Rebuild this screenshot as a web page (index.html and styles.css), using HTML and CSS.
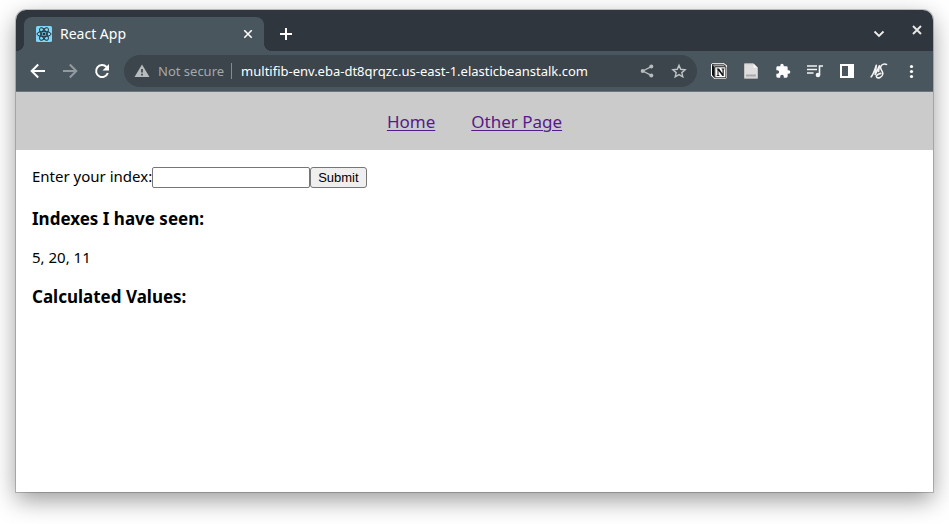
FILE: index.html
```html
<!DOCTYPE html>
<html lang="en">
<head>
<meta charset="utf-8">
<title>React App</title>
<link rel="stylesheet" href="styles.css">
</head>
<body>
<div class="window">
  <div class="tabstrip">
    <div class="tab">
      <svg class="favicon" width="16" height="16" viewBox="0 0 16 16" aria-hidden="true">
        <rect width="16" height="16" rx="1.5" fill="#7fd5fa"/>
        <g fill="none" stroke="#26323a" stroke-width="1">
          <ellipse cx="8" cy="8" rx="7" ry="2.7"/>
          <ellipse cx="8" cy="8" rx="7" ry="2.7" transform="rotate(60 8 8)"/>
          <ellipse cx="8" cy="8" rx="7" ry="2.7" transform="rotate(120 8 8)"/>
        </g>
        <circle cx="8" cy="8" r="1.5" fill="#26323a"/>
      </svg>
      <span class="tab-title">React App</span>
      <button class="icon-btn tab-close" aria-label="Close tab">
        <svg width="16" height="16" viewBox="0 0 16 16"><path d="M4.3 4.3l7.4 7.4M11.7 4.3l-7.4 7.4" stroke="#fff" stroke-width="1.6"/></svg>
      </button>
    </div>
    <button class="icon-btn new-tab" aria-label="New tab">
      <svg width="16" height="16" viewBox="0 0 16 16"><path d="M8 2v12M2 8h12" stroke="#fff" stroke-width="2"/></svg>
    </button>
    <button class="icon-btn tab-search" aria-label="Search tabs">
      <svg width="16" height="16" viewBox="0 0 16 16"><path d="M3.5 5.5L8 10l4.5-4.5" fill="none" stroke="#eee" stroke-width="1.8"/></svg>
    </button>
    <button class="icon-btn window-close" aria-label="Close window">
      <svg width="16" height="16" viewBox="0 0 16 16"><path d="M4 4l8 8M12 4l-8 8" stroke="#e6e6e6" stroke-width="2"/></svg>
    </button>
  </div>

  <div class="toolbar">
    <div class="group">
      <button class="icon-btn" aria-label="Back">
        <svg width="16" height="16" viewBox="0 0 16 16"><path d="M15 8H2.500M8.200 1.500L1.700 8l6.500 6.500" fill="none" stroke="#fff" stroke-width="2"/></svg>
      </button>
      <button class="icon-btn" aria-label="Forward">
        <svg width="16" height="16" viewBox="0 0 16 16"><path d="M1 8h12.500M7.800 1.500L14.300 8l-6.500 6.500" fill="none" stroke="#929a9f" stroke-width="2"/></svg>
      </button>
      <button class="icon-btn" aria-label="Reload">
        <svg width="16" height="16" viewBox="0 0 16 16"><path d="M13.800 10A6 6 0 1 1 12.500 4" fill="none" stroke="#fff" stroke-width="2"/><path d="M15 1v6.500H8.500z" fill="#fff"/></svg>
      </button>
    </div>

    <div class="omnibox">
      <svg class="warning" width="16" height="16" viewBox="0 0 16 16" aria-hidden="true"><path d="M8 1.500L15.500 14H.5z" fill="#b9bcbe"/><path d="M8 6v3.500M8 10.700v1.800" stroke="#3b454b" stroke-width="1.700"/></svg>
      <span class="secure">Not secure</span>
      <input class="url" aria-label="Address" value="multifib-env.eba-dt8qrqzc.us-east-1.elasticbeanstalk.com">
      <button class="icon-btn" aria-label="Share">
        <svg width="16" height="16" viewBox="0 0 16 16"><path d="M12.300 3.700L3.800 8l8.500 4.300" fill="none" stroke="#b9bcbe" stroke-width="1.300"/><g fill="#b9bcbe"><circle cx="12.300" cy="3.600" r="2"/><circle cx="3.700" cy="8" r="2"/><circle cx="12.300" cy="12.400" r="2"/></g></svg>
      </button>
      <button class="icon-btn" aria-label="Bookmark">
        <svg width="16" height="16" viewBox="0 0 16 16"><path d="M8 2.300l1.700 4 4.400.4-3.300 2.900 1 4.300L8 11.600l-3.800 2.300 1-4.300-3.300-2.900 4.400-.4z" fill="none" stroke="#c0c3c5" stroke-width="1.400"/></svg>
      </button>
    </div>

    <div class="group">
      <button class="icon-btn" aria-label="Notion">
        <svg width="16" height="16" viewBox="0 0 16 16"><path d="M0 1.500L1.500 0h11.200L16 2.500v12L14.500 16H3.500L0 12.500z" fill="#fff"/><path d="M1 1.500L3.500 4v11L1 12z" fill="#111"/><path d="M1.300 1.300h11l2.200 1.700H3.800z" fill="#fff" stroke="#111" stroke-width=".8"/><path d="M3.800 3.800h11.100v11H3.800z" fill="#fff" stroke="#111" stroke-width=".9"/><path d="M5.700 5.500h2.400l3.400 5V6.600l-1-.3v-.8h3v.8l-.8.3v6.500h-1.300L7.500 7.700v4.400l1.100.3v.7H5.600v-.7l.9-.3V6.500l-.8-.2z" fill="#111"/></svg>
      </button>
      <button class="icon-btn" aria-label="Document extension">
        <svg width="16" height="16" viewBox="0 0 16 16"><path d="M1.500.8h9l4 4v10.400h-13z" fill="#dedede" stroke="#c4c1bd"/><path d="M10.500.8v4h4z" fill="#f7f7f7"/><path d="M3 11.500h10v2H3z" fill="#a8a8a8"/></svg>
      </button>
      <button class="icon-btn" aria-label="Extensions">
        <svg width="16" height="16" viewBox="0 0 24 24"><path d="M20.500 11H19V7a2 2 0 0 0-2-2h-4V3.500a2.500 2.500 0 0 0-5 0V5H4a2 2 0 0 0-2 2v3.800h1.500a2.700 2.700 0 0 1 0 5.400H2V20a2 2 0 0 0 2 2h3.800v-1.500a2.700 2.700 0 0 1 5.400 0V22H17a2 2 0 0 0 2-2v-4h1.500a2.500 2.500 0 0 0 0-5z" fill="#fff"/></svg>
      </button>
      <button class="icon-btn" aria-label="Media controls">
        <svg width="16" height="16" viewBox="0 0 16 16"><path d="M0 3h10M0 6.500h10M0 10h6.500M12.500 12V3h3.500" fill="none" stroke="#f4f4f4" stroke-width="1.600"/><circle cx="11" cy="12" r="2.300" fill="#f4f4f4"/></svg>
      </button>
      <button class="icon-btn" aria-label="Side panel">
        <svg width="16" height="16" viewBox="0 0 16 16"><path d="M1 1h14v14H1zM3 3v10h6V3z" fill="#fff" fill-rule="evenodd"/></svg>
      </button>
      <button class="icon-btn" aria-label="Profile">
        <svg width="18" height="16" viewBox="0 0 18 16"><path d="M1.200 13.800C3.500 11 4.700 7 6.300 2.300L5.200 11.500C7 8.500 8 5.500 9.300 2.800L8.600 8.500M16.500 1.500C14 .2 11.300 1.600 10.600 4c-.6 2.600 2.600 4 2.200 7-.4 3.300-4.800 5-6.200 3-.9-1.600 1.400-3 4.200-3.600" fill="none" stroke="#f2f2f2" stroke-width="1.600" stroke-linecap="round" stroke-linejoin="round"/></svg>
      </button>
      <button class="icon-btn" aria-label="Menu">
        <svg width="16" height="16" viewBox="0 0 16 16"><g fill="#fff"><circle cx="8.500" cy="3.500" r="1.600"/><circle cx="8.500" cy="8.500" r="1.600"/><circle cx="8.500" cy="13.500" r="1.600"/></g></svg>
      </button>
    </div>
  </div>

  <header class="site-nav">
    <a href="#home">Home</a>
    <a href="#other">Other Page</a>
  </header>

  <main class="content">
    <form class="index-form">
      <label for="index">Enter your index:</label>
      <input id="index" class="index-input">
      <button class="submit" type="button">Submit</button>
    </form>
    <h3>Indexes I have seen:</h3>
    <p>5, 20, 11</p>
    <h3>Calculated Values:</h3>
  </main>
</div>
</body>
</html>
```
FILE: styles.css
```css
* { box-sizing: border-box; }

body {
  margin: 0;
  padding: 10px 16px 32px;
  min-height: 100vh;
  display: flex;
  background: #fff;
  color: #000;
  font: 15px/20px "Noto Sans", "Open Sans", sans-serif;
}

.window {
  flex: 1;
  min-width: 0;
  display: flex;
  flex-direction: column;
  border-radius: 10px 10px 0 0;
  background: #fff;
  box-shadow: 0 0 0 1px rgba(0, 0, 0, 0.2), 0 8px 24px rgba(0, 0, 0, 0.4);
}

.icon-btn {
  display: flex;
  align-items: center;
  justify-content: center;
  flex: none;
  width: 32px;
  height: 32px;
  padding: 0;
  border: 0;
  background: none;
}

.tabstrip {
  display: flex;
  align-items: center;
  height: 41px;
  padding: 7px 0 0 8px;
  border-radius: 10px 10px 0 0;
  background: #2f363d;
}

.tab {
  position: relative;
  display: flex;
  align-items: center;
  gap: 8px;
  width: 240px;
  height: 34px;
  padding: 0 8px 0 12px;
  border-radius: 8px 8px 0 0;
  background: #49565e;
  color: #fff;
  font-size: 14px;
}

.tab::before,
.tab::after {
  content: "";
  position: absolute;
  bottom: 0;
  width: 8px;
  height: 8px;
}

.tab::before {
  right: 100%;
  background: radial-gradient(circle at 0 0, transparent 8px, #49565e 8px);
}

.tab::after {
  left: 100%;
  background: radial-gradient(circle at 100% 0, transparent 8px, #49565e 8px);
}

.tab-title { flex: 1; }
.tab-close { width: 16px; }
.new-tab { margin-left: 6px; }
.tab-search { margin-left: auto; }

.window-close {
  height: 26px;
  margin-left: 6px;
  align-self: flex-start;
}

.toolbar {
  display: flex;
  align-items: center;
  gap: 6px;
  height: 41px;
  padding: 0 6px;
  border-bottom: 1px solid #6b757b;
  background: #49565e;
}

.group { display: flex; }

.omnibox {
  flex: 1;
  min-width: 0;
  display: flex;
  align-items: center;
  height: 32px;
  padding: 0 2px 0 10px;
  border-radius: 16px;
  background: #3b454b;
  font-size: 13px;
}

.secure {
  margin: 0 7px 0 8px;
  color: #a5a9ab;
  white-space: nowrap;
}

.url {
  flex: 1;
  min-width: 0;
  height: 16px;
  padding: 0 0 0 9px;
  border: 0;
  border-left: 1px solid #858b8f;
  background: none;
  color: #fff;
  font: inherit;
}

.site-nav {
  display: flex;
  align-items: center;
  justify-content: center;
  gap: 36px;
  min-height: 58px;
  padding-top: 2px;
  background: #cbcbcb;
  font-size: 17px;
}

.site-nav a {
  color: #551a8b;
  text-decoration-thickness: 1px;
  text-underline-offset: 2px;
}

.content { padding: 17px 16px; }

.index-form {
  display: flex;
  align-items: flex-start;
}

.index-form label { line-height: 18px; }

.index-input {
  width: 158px;
  height: 21px;
  padding: 1px 2px;
  border: 1px solid #767676;
  border-radius: 2px;
}

.submit {
  height: 21px;
  padding: 0 7px;
  border: 1px solid #767676;
  border-radius: 3px;
  background: #efefef;
  color: #000;
  font: 13px "Liberation Sans", sans-serif;
}

h3 {
  margin: 21px 0 18px;
  font-size: 17px;
  line-height: 20px;
}

p { margin: 0; }
p + h3 { margin-top: 20px; }
```
